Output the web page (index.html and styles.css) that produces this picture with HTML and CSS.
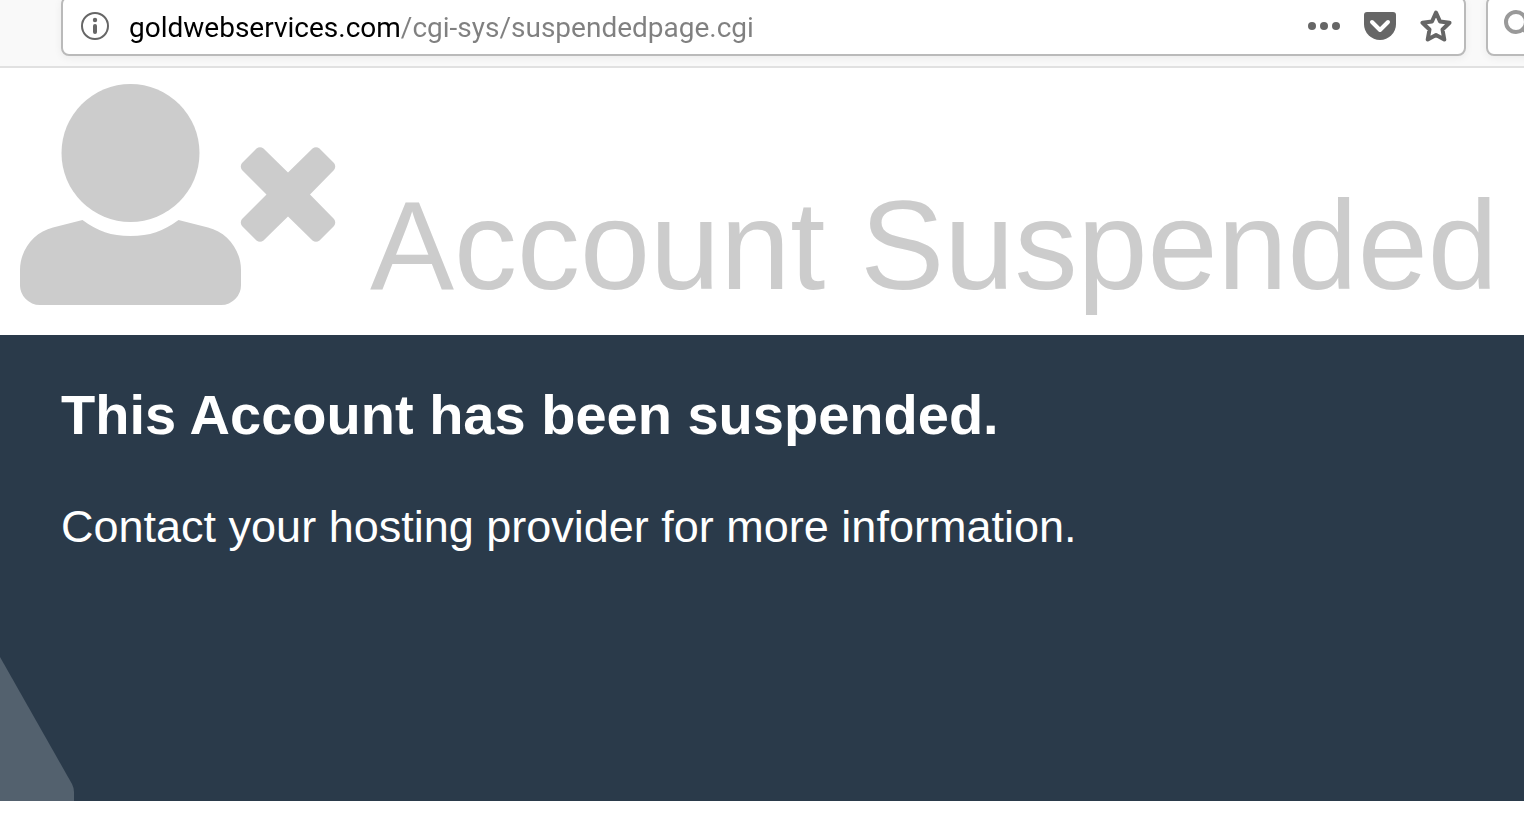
FILE: index.html
```html
<!DOCTYPE html>
<html lang="en">
<head>
    <meta charset="UTF-8">
    <meta name="viewport" content="width=device-width, initial-scale=1.0">
    <title>Account Suspended</title>
    <link rel="stylesheet" href="styles.css">
</head>
<body>
    <div class="toolbar">
        <div class="bar url-bar">
            <button class="icon-button" aria-label="Site information">
                <svg width="28" height="28" viewBox="0 0 28 28">
                    <circle cx="14" cy="14" r="13" fill="none" stroke="#666" stroke-width="2"/>
                    <circle cx="14" cy="8" r="2.2" fill="#666"/>
                    <path d="M14 14v6" stroke="#666" stroke-width="4" stroke-linecap="round"/>
                </svg>
            </button>
            <input class="url-input" type="text" aria-label="Address" spellcheck="false" value="goldwebservices.com/cgi-sys/suspendedpage.cgi">
            <div class="actions">
                <button class="icon-button" aria-label="Page actions">
                    <svg width="32" height="32" viewBox="0 0 32 32" fill="#666">
                        <circle cx="4" cy="16" r="4"/>
                        <circle cx="16" cy="16" r="4"/>
                        <circle cx="28" cy="16" r="4"/>
                    </svg>
                </button>
                <button class="icon-button" aria-label="Save to Pocket">
                    <svg width="32" height="32" viewBox="0 0 32 32">
                        <path d="M3 2h26a3 3 0 0 1 3 3v9a16 16 0 0 1-32 0V5a3 3 0 0 1 3-3z" fill="#666"/>
                        <path d="M8 12l8 8 8-8" fill="none" stroke="#fff" stroke-width="4" stroke-linecap="round" stroke-linejoin="round"/>
                    </svg>
                </button>
                <button class="icon-button" aria-label="Bookmark this page">
                    <svg width="32" height="32" viewBox="0 0 32 32">
                        <path d="M16 2.5l4 9 9.500 1.200-7 6.800 1.800 10L16 25l-8.300 4.500 1.800-10-7-6.800 9.500-1.200z" fill="none" stroke="#666" stroke-width="4" stroke-linejoin="round"/>
                    </svg>
                </button>
            </div>
        </div>
        <div class="bar search-bar">
            <svg class="search-icon" width="32" height="32" viewBox="0 0 32 32" fill="none" stroke="#999" stroke-width="4">
                <circle cx="12" cy="12" r="10"/>
                <path d="M19 19l10 10" stroke-linecap="round"/>
            </svg>
            <input class="search-input" type="text" aria-label="Search">
        </div>
    </div>

    <header class="page-header">
        <svg class="user-icon" width="316" height="221" viewBox="0 0 316 221" fill="#ccc" aria-hidden="true">
            <circle cx="110.500" cy="69" r="69"/>
            <path d="M62.500 136C78 147.500 91 152 110.500 152S143 147.500 158.500 136L188 143.500C207 148 221 166 221 186V200A20 20 0 0 1 201 221H20A20 20 0 0 1 0 200V186C0 166 14 148 33 143.500Z"/>
            <path d="M236.500 64.500Q240 62 243.500 64.500L268 88.500L292.500 64.500Q296 62 299.500 64.500L314 79Q316.500 82.500 314 86L290 110.500L314 135Q316.500 138.500 314 142L299.500 156.500Q296 159 292.500 156.500L268 132.500L243.500 156.500Q240 159 236.500 156.500L222 142Q219.500 138.500 222 135L246.500 110.500L222 86Q219.500 82.500 222 79Z"/>
        </svg>
        <h1>Account Suspended</h1>
    </header>

    <main class="info">
        <h2>This Account has been suspended.</h2>
        <p>Contact your hosting provider for more information.</p>
        <svg class="corner" width="74" height="144" viewBox="0 0 74 144" aria-hidden="true">
            <path d="M0 0L72 127Q74 131 74 135V144H0Z" fill="#53616e"/>
        </svg>
    </main>
</body>
</html>
```
FILE: styles.css
```css
* {
    box-sizing: border-box;
}

body {
    display: flex;
    flex-direction: column;
    min-height: 100vh;
    margin: 0;
    background: #fff;
    font-family: "Liberation Sans", Arial, sans-serif;
}

/* browser toolbar */
.toolbar {
    display: flex;
    gap: 20px;
    padding: 0 0 10px 61px;
    background: #f9f9f9;
    border-bottom: 2px solid #e1e1e1;
    overflow: hidden;
}

.bar {
    display: flex;
    align-items: center;
    height: 60px;
    margin-top: -4px;
    background: #fff;
    border: 2px solid #bababa;
    border-radius: 8px;
    box-shadow: 0 2px 8px rgba(0, 0, 0, 0.06);
}

.url-bar {
    flex: 1;
    min-width: 0;
    gap: 20px;
    padding: 0 12px 0 18px;
}

/* the search box runs past the right edge of the window */
.search-bar {
    flex: 0 0 300px;
    min-width: 0;
    margin-right: -262px;
    padding: 0 16px;
}

.search-icon {
    flex: none;
}

.icon-button {
    display: flex;
    padding: 0;
    border: none;
    background: none;
    cursor: pointer;
}

.actions {
    display: flex;
    gap: 24px;
}

.url-input,
.search-input {
    flex: 1;
    min-width: 0;
    padding: 4px 0 0;
    border: none;
    outline: none;
    background: none;
    font-family: Roboto, sans-serif;
    font-size: 28px;
    line-height: 36px;
}

/* domain in black, path in grey */
.url-input {
    background: linear-gradient(to right, #000 271px, #808080 271px);
    -webkit-background-clip: text;
    background-clip: text;
    color: transparent;
    caret-color: #000;
}

/* page */
.page-header {
    display: flex;
    align-items: flex-end;
    gap: 34px;
    padding: 16px 20px 30px;
    color: #ccc;
}

.user-icon {
    flex: none;
}

h1 {
    margin: 0;
    font-size: 126px;
    font-weight: normal;
    line-height: 118px;
    white-space: nowrap;
}

.info {
    position: relative;
    flex: 1;
    margin-bottom: 39px;
    padding: 48px 61px;
    background: #2a3a4a;
    color: #fff;
}

h2 {
    margin: 0 0 48px;
    font-size: 56px;
    line-height: 64px;
}

p {
    margin: 0;
    font-size: 45px;
    line-height: 64px;
}

.corner {
    position: absolute;
    left: 0;
    bottom: 0;
}
```
